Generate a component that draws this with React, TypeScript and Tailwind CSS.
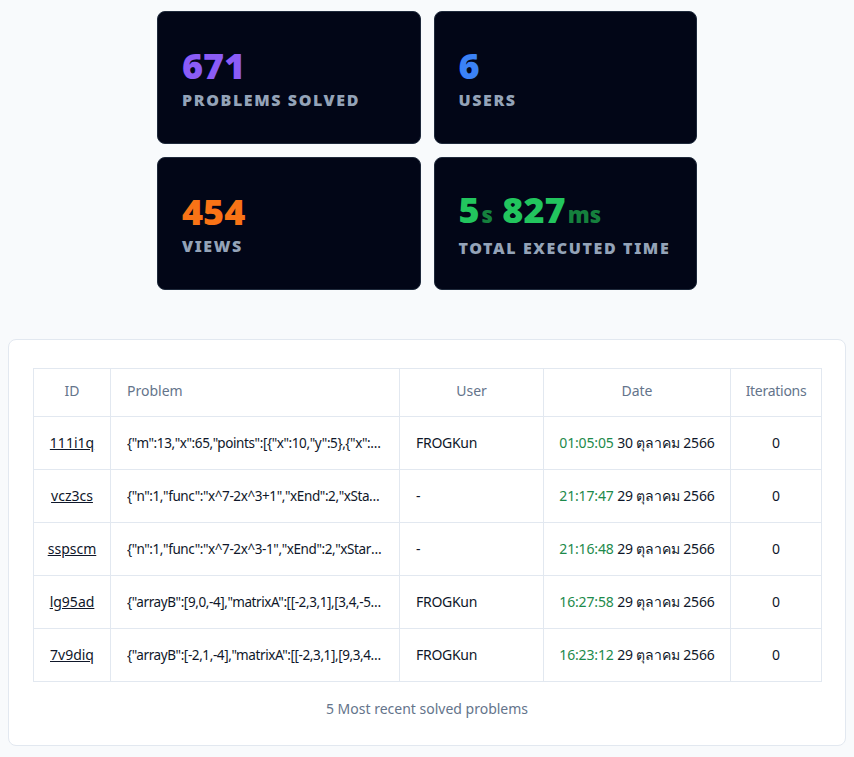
import React from 'react'

interface Stat {
  label: string
  value: React.ReactNode
}

const stats: Stat[] = [
  { label: 'Problems Solved', value: <span className="text-[#8b5cf6]">671</span> },
  { label: 'Users', value: <span className="text-[#3b82f6]">6</span> },
  { label: 'Views', value: <span className="text-[#f97316]">454</span> },
  {
    label: 'Total Executed Time',
    value: (
      <span className="text-[#22c55e]">
        5<span className="text-[22px] text-[#15803d] ml-[2px]">s</span> 827
        <span className="text-[22px] text-[#15803d] ml-[2px]">ms</span>
      </span>
    ),
  },
]

interface Row {
  id: string
  problem: string
  user: string
  time: string
  date: string
  iterations: number
}

const rows: Row[] = [
  {
    id: '111i1q',
    problem: '{"m":13,"x":65,"points":[{"x":10,"y":5},{"x":15,"y":25}]}',
    user: 'FROGKun',
    time: '01:05:05',
    date: '30 ตุลาคม 2566',
    iterations: 0,
  },
  {
    id: 'vcz3cs',
    problem: '{"n":1,"func":"x^7-2x^3+1","xEnd":2,"xStart":1}',
    user: '-',
    time: '21:17:47',
    date: '29 ตุลาคม 2566',
    iterations: 0,
  },
  {
    id: 'sspscm',
    problem: '{"n":1,"func":"x^7-2x^3-1","xEnd":2,"xStart":1}',
    user: '-',
    time: '21:16:48',
    date: '29 ตุลาคม 2566',
    iterations: 0,
  },
  {
    id: 'lg95ad',
    problem: '{"arrayB":[9,0,-4],"matrixA":[[-2,3,1],[3,4,-5],[1,-2,1]]}',
    user: 'FROGKun',
    time: '16:27:58',
    date: '29 ตุลาคม 2566',
    iterations: 0,
  },
  {
    id: '7v9diq',
    problem: '{"arrayB":[-2,1,-4],"matrixA":[[-2,3,1],[9,3,4],[1,-2,1]]}',
    user: 'FROGKun',
    time: '16:23:12',
    date: '29 ตุลาคม 2566',
    iterations: 0,
  },
]

function StatCard({ stat }: { stat: Stat }) {
  return (
    <div className="h-[133px] rounded-lg border border-[#1e293b] bg-[#020617] px-[24px] flex flex-col justify-center">
      <div className="text-[36px] leading-[40px] font-black">{stat.value}</div>
      <div className="mt-[4px] text-[16px] leading-[20px] font-black uppercase tracking-[0.1em] text-[#94a3b8]">
        {stat.label}
      </div>
    </div>
  )
}

export default function App() {
  return (
    <div
      className="min-h-screen bg-[#f8fafc] pt-[11px] pb-[12px] px-[8px]"
      style={{ fontFamily: '"Noto Sans", "Noto Sans CJK SC", sans-serif' }}
    >
      <div className="mx-auto w-[540px] grid grid-cols-2 gap-[13px]">
        {stats.map((s) => (
          <StatCard key={s.label} stat={s} />
        ))}
      </div>

      <div className="mt-[49px] rounded-lg border border-[#e2e8f0] bg-white pl-[24px] pr-[24px] pt-[28px] pb-[26px]">
        <table className="w-[788px] table-fixed border-collapse text-[14px] leading-[20px] text-[#0f172a]">
          <colgroup>
            <col className="w-[77px]" />
            <col className="w-[289px]" />
            <col className="w-[144px]" />
            <col className="w-[187px]" />
            <col className="w-[91px]" />
          </colgroup>
          <thead>
            <tr className="h-[48px] text-[#64748b]">
              <th className="border border-[#e2e8f0] font-normal text-center pb-[3px]">ID</th>
              <th className="border border-[#e2e8f0] font-normal text-left px-[16px] pb-[3px]">Problem</th>
              <th className="border border-[#e2e8f0] font-normal text-center pb-[3px]">User</th>
              <th className="border border-[#e2e8f0] font-normal text-center pb-[3px]">Date</th>
              <th className="border border-[#e2e8f0] font-normal text-center pb-[3px] tracking-[-0.02em]">Iterations</th>
            </tr>
          </thead>
          <tbody>
            {rows.map((r) => (
              <tr key={r.id} className="h-[53px]">
                <td className="border border-[#e2e8f0] text-center">
                  <a href="#" className="underline">
                    {r.id}
                  </a>
                </td>
                <td className="border border-[#e2e8f0] px-[16px]">
                  <div className="truncate text-[13.5px] tracking-[-0.03em]">{r.problem}</div>
                </td>
                <td className="border border-[#e2e8f0] px-[16px] tracking-[-0.02em]">{r.user}</td>
                <td className="border border-[#e2e8f0] text-center tracking-[-0.01em]">
                  <span className="text-[#1d8a4b]">{r.time}</span> {r.date}
                </td>
                <td className="border border-[#e2e8f0] text-center">{r.iterations}</td>
              </tr>
            ))}
          </tbody>
        </table>
        <div className="mt-[16px] text-center text-[14px] text-[#64748b]">5 Most recent solved problems</div>
      </div>
    </div>
  )
}
